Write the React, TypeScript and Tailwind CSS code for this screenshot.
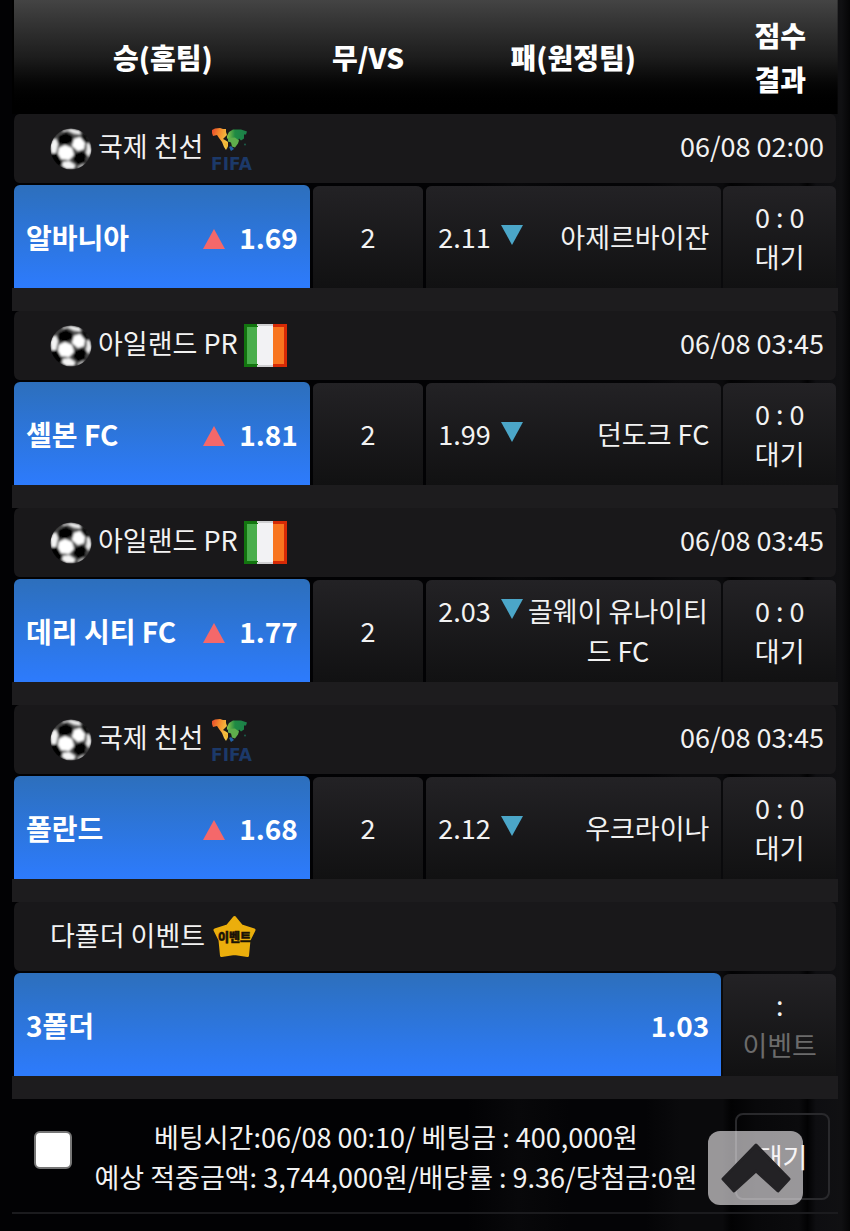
import { ChangeEvent, useState } from 'react'

type Icon = 'fifa' | 'ireland' | 'event'

interface Match {
  league: string
  icon: Icon
  date: string
  home: string
  homeOdds: string
  draw: string
  away: string
  awayOdds: string
  score: string
  status: string
}

const matches: Match[] = [
  { league: '국제 친선', icon: 'fifa', date: '06/08 02:00', home: '알바니아', homeOdds: '1.69', draw: '2', away: '아제르바이잔', awayOdds: '2.11', score: '0 : 0', status: '대기' },
  { league: '아일랜드 PR', icon: 'ireland', date: '06/08 03:45', home: '셸본 FC', homeOdds: '1.81', draw: '2', away: '던도크 FC', awayOdds: '1.99', score: '0 : 0', status: '대기' },
  { league: '아일랜드 PR', icon: 'ireland', date: '06/08 03:45', home: '데리 시티 FC', homeOdds: '1.77', draw: '2', away: '골웨이 유나이티드 FC', awayOdds: '2.03', score: '0 : 0', status: '대기' },
  { league: '국제 친선', icon: 'fifa', date: '06/08 03:45', home: '폴란드', homeOdds: '1.68', draw: '2', away: '우크라이나', awayOdds: '2.12', score: '0 : 0', status: '대기' },
]

const darkCell = 'border-t-3 border-transparent bg-clip-padding bg-linear-to-b from-[#232225] to-[#111112] rounded-t-[8px]'
const pickedCell = 'border-t-2 border-transparent bg-clip-padding bg-linear-to-b from-[#2d6fbc] to-[#2d7bfd] rounded-t-[8px]'

function SoccerBall() {
  return (
    <svg className="size-[42px] shrink-0" viewBox="0 0 42 42" aria-hidden="true">
      <defs>
        <clipPath id="ball"><circle cx="21" cy="21" r="20.5" /></clipPath>
        <filter id="soft"><feGaussianBlur stdDeviation="0.8" /></filter>
      </defs>
      <g clipPath="url(#ball)">
        <g filter="url(#soft)">
          <circle cx="21" cy="21" r="20" fill="#555" />
          <path d="M8 8l8-4 7 4 0 6-7 3-8-1z" fill="#050505" />
          <path d="M24 26l8-3 5 3-2 9-7 2-5-4z" fill="#050505" />
          <path d="M1 26l7-1 3 7 2 5-5 1-6-7z" fill="#050505" />
          <path d="M30 4l6 3 4 8-5 0-3-5z" fill="#111" />
          <path d="M9 20l6-3 7 3 2 7-5 5-8-1-3-5z" fill="#fff" />
          <path d="M24 11l6-2 5 6-1 6-6 2-6-5z" fill="#fff" />
          <path d="M3 11l3 0 2 5-2 9-5 0-1-8z" fill="#f4f4f4" />
          <path d="M13 2l8-1.500 9 2 1 4-7-1-6-3-6 1z" fill="#eee" />
          <path d="M37 15l3 1 2 7-3 6-3-4 1-5z" fill="#eee" />
          <path d="M13 34l6-1 6 4-1 4-8 0-4-3z" fill="#f5f5f5" />
          <path d="M29 38l6-3-2 4-6 2z" fill="#bbb" />
        </g>
      </g>
    </svg>
  )
}

function FifaLogo() {
  return (
    <svg className="h-[52px] w-[46px] shrink-0" viewBox="-1 -5 46 52" aria-hidden="true">
      <defs>
        <linearGradient id="west" x1="0" y1="0" x2="1" y2="0.4">
          <stop offset="0" stopColor="#e8452c" />
          <stop offset="0.45" stopColor="#f58a2c" />
          <stop offset="1" stopColor="#f3c944" />
        </linearGradient>
        <linearGradient id="east" x1="0" y1="0" x2="1" y2="0">
          <stop offset="0" stopColor="#8cc44a" />
          <stop offset="0.4" stopColor="#1f8a43" />
          <stop offset="1" stopColor="#1c7f4a" />
        </linearGradient>
      </defs>
      <path d="M2 2l3-1.500 5-.5 3 1 3 0 0 3 1 3-2 2-2 2 2 1 3 2 0 4-2 4-2-3-2-5-3-4-2-3-4 1-1-3z" fill="url(#west)" />
      <path d="M17 8l2-4 4-2.500 8 0 6 2-1 3-2 0 0 4-3 2-2-2-1 3-4-2-3 0-4-1z" fill="url(#east)" />
      <path d="M18 10l7-.5 4 3-1 3-3 4-3-1-1-4-3-1z" fill="#5fae4c" />
      <path d="M14 15l4-1-1 7z" fill="#f0b534" />
      <path d="M19 19l2-1 3 3-3 2z" fill="#2463a5" />
      <circle cx="35" cy="16.500" r="1" fill="#1c5d4a" />
      <text x="21.500" y="42" textAnchor="middle" fill="#1c3969" fontFamily="'DejaVu Sans', sans-serif" fontWeight="700" fontSize="17">FIFA</text>
    </svg>
  )
}

function IrelandFlag() {
  return (
    <svg className="size-[43px] shrink-0" viewBox="0 0 43 43" aria-hidden="true">
      <rect width="14" height="43" fill="#4aae4c" />
      <rect x="13" width="17" height="43" fill="#f2f2f4" />
      <rect x="29" width="14" height="43" fill="#f8751f" />
      <path d="M14 1.500H1.500v40H14" fill="none" stroke="#12750f" strokeWidth="3" />
      <path d="M13 1h17M13 42h17" stroke="#cfcfd1" strokeWidth="2" />
      <path d="M29 1.500h12.500v40H29" fill="none" stroke="#d62a06" strokeWidth="3" />
    </svg>
  )
}

function EventStar() {
  return (
    <svg className="size-[43px] shrink-0" viewBox="0 0 43 43" aria-hidden="true">
      <path d="M21.500 2.500l7 8.500 12.500 4-5 10-1.500 15.500-13-2-13 2L7 25 2 15l12.500-4z" fill="#ebae0c" stroke="#ebae0c" strokeWidth="3" strokeLinejoin="round" />
      <text x="21.500" y="27" textAnchor="middle" fill="#1a1206" stroke="#1a1206" strokeWidth="0.5" fontFamily="'Noto Sans CJK KR', sans-serif" fontWeight="900" fontSize="12">이벤트</text>
    </svg>
  )
}

function LeagueIcon({ icon }: { icon: Icon }) {
  if (icon === 'fifa') return <FifaLogo />
  if (icon === 'ireland') return <IrelandFlag />
  return <EventStar />
}

function Spacer() {
  return (
    <tr>
      <td colSpan={4} className="h-[23px] bg-[#1d1c1e] p-0"></td>
    </tr>
  )
}

function MatchRows({ match }: { match: Match }) {
  return (
    <>
      {/* League */}
      <tr>
        <td colSpan={4} className="h-[69px] rounded-[7px] border-x-2 border-transparent bg-[#19181a] bg-clip-padding p-0">
          <div className="flex items-center justify-between pr-3 pl-9">
            <div className="flex items-center">
              <SoccerBall />
              <span className="mr-1.5 ml-1.5 pb-1.5">{match.league}</span>
              <LeagueIcon icon={match.icon} />
            </div>
            <span className="pb-1.5">{match.date}</span>
          </div>
        </td>
      </tr>

      {/* Odds */}
      <tr>
        <td className={`h-[105px] border-x-2 px-3 py-0 ${pickedCell}`}>
          <div className="flex items-center font-bold text-white">
            <span className="flex-1 text-[28px]">{match.home}</span>
            <svg className="mt-1 mr-3.5 h-5 w-[22px]" viewBox="0 0 22 20" aria-hidden="true">
              <path d="M11 0l11 20H0z" fill="#f4686a" />
            </svg>
            <span className="text-[28px]">{match.homeOdds}</span>
          </div>
        </td>
        <td className={`border-x px-0 py-0 text-center ${darkCell}`}>{match.draw}</td>
        <td className={`border-r border-l-2 px-3 py-0 ${darkCell}`}>
          <div className="flex items-start">
            <span>{match.awayOdds}</span>
            <svg className="mt-2 mr-1 ml-2.5 h-5 w-[22px] shrink-0" viewBox="0 0 22 20" aria-hidden="true">
              <path d="M0 0h22L11 20z" fill="#4ba6c8" />
            </svg>
            <div className="flex flex-1 justify-end text-center break-all">
              <span>{match.away}</span>
            </div>
          </div>
        </td>
        <td className={`border-l border-r-2 px-0 py-0 text-center ${darkCell}`}>
          <div>{match.score}</div>
          <div>{match.status}</div>
        </td>
      </tr>
      <Spacer />
    </>
  )
}

export default function App() {
  const [checked, setChecked] = useState(false)

  return (
    <div className="min-h-screen bg-[#020204] bg-[linear-gradient(90deg,transparent_55%,#08080a_61%,#040406_67%,#040406_76%,#0a0a0c_80%,#0a0a0c_85%,#020203_86%,#08080a_89%,#0b0b0d_94%,#020203_95%,#0e0e11_96%,#101012_99%,#050506_100%)] px-3 font-['Noto_Sans_CJK_KR',sans-serif] text-[27px] leading-10 text-[#f2f2f2]">
      <table className="w-full table-fixed border-separate border-spacing-0">
        <colgroup>
          <col className="w-[36.3%]" />
          <col className="w-[13.6%]" />
          <col className="w-[36.1%]" />
          <col className="w-[14%]" />
        </colgroup>
        <thead>
          <tr className="bg-linear-to-b from-[#444444] via-[#1d1d1d] to-black text-[28px] leading-11 text-white">
            <th className="h-[114px] border-l-2 border-black p-0 font-black">승(홈팀)</th>
            <th className="p-0 font-black">무/VS</th>
            <th className="p-0 font-black">패(원정팀)</th>
            <th className="p-0 font-black">
              점수
              <br />
              결과
            </th>
          </tr>
        </thead>
        <tbody>
          {matches.map((m, i) => (
            <MatchRows key={i} match={m} />
          ))}

          {/* Folder event */}
          <tr>
            <td colSpan={4} className="h-[69px] rounded-[7px] border-x-2 border-transparent bg-[#19181a] bg-clip-padding p-0">
              <div className="flex items-center pl-9">
                <span className="mr-2 pb-1">다폴더 이벤트</span>
                <LeagueIcon icon="event" />
              </div>
            </td>
          </tr>
          <tr>
            <td colSpan={3} className={`h-[105px] border-r border-l-2 px-3 py-0 ${pickedCell}`}>
              <div className="flex items-center justify-between text-[28px] font-bold text-white">
                <span>3폴더</span>
                <span>1.03</span>
              </div>
            </td>
            <td className={`border-l border-r-2 px-0 py-0 text-center ${darkCell}`}>
              <div>:</div>
              <div className="text-[#6b6b6b]">이벤트</div>
            </td>
          </tr>
          <Spacer />
        </tbody>
      </table>

      {/* Bet summary */}
      <div className="flex items-center border-b-2 border-[#1b1b1e] pt-3.5 pb-3">
        <div className="flex w-[82px] justify-center pb-3.5">
          <input
            type="checkbox"
            aria-label="베팅 선택"
            checked={checked}
            onChange={(e: ChangeEvent<HTMLInputElement>) => setChecked(e.target.checked)}
            className="size-[38px] appearance-none rounded-md border-2 border-[#767676] bg-white checked:bg-[#2d7bfd]"
          />
        </div>
        <div className="flex-1 text-center whitespace-nowrap">
          <div>베팅시간:06/08 00:10/ 베팅금 : 400,000원</div>
          <div>예상 적중금액: 3,744,000원/배당률 : 9.36/당첨금:0원</div>
        </div>
        <div className="flex w-[140px] justify-end pr-2">
          <button className="h-[87px] w-[95px] rounded-lg border-2 border-[#29292c]">대기</button>
        </div>
      </div>

      <button
        aria-label="맨 위로"
        onClick={() => window.scrollTo(0, 0)}
        className="fixed right-[47px] bottom-[26px] flex h-[74px] w-[95px] items-center justify-center rounded-xl bg-[#f8f5f8]/60"
      >
        <svg className="h-[50px] w-[70px]" viewBox="0 0 70 50" aria-hidden="true">
          <path d="M35 2L68 36 57 48 35 28 13 48 2 36z" fill="#232225" stroke="#232225" strokeWidth="3" strokeLinejoin="round" />
        </svg>
      </button>
    </div>
  )
}
